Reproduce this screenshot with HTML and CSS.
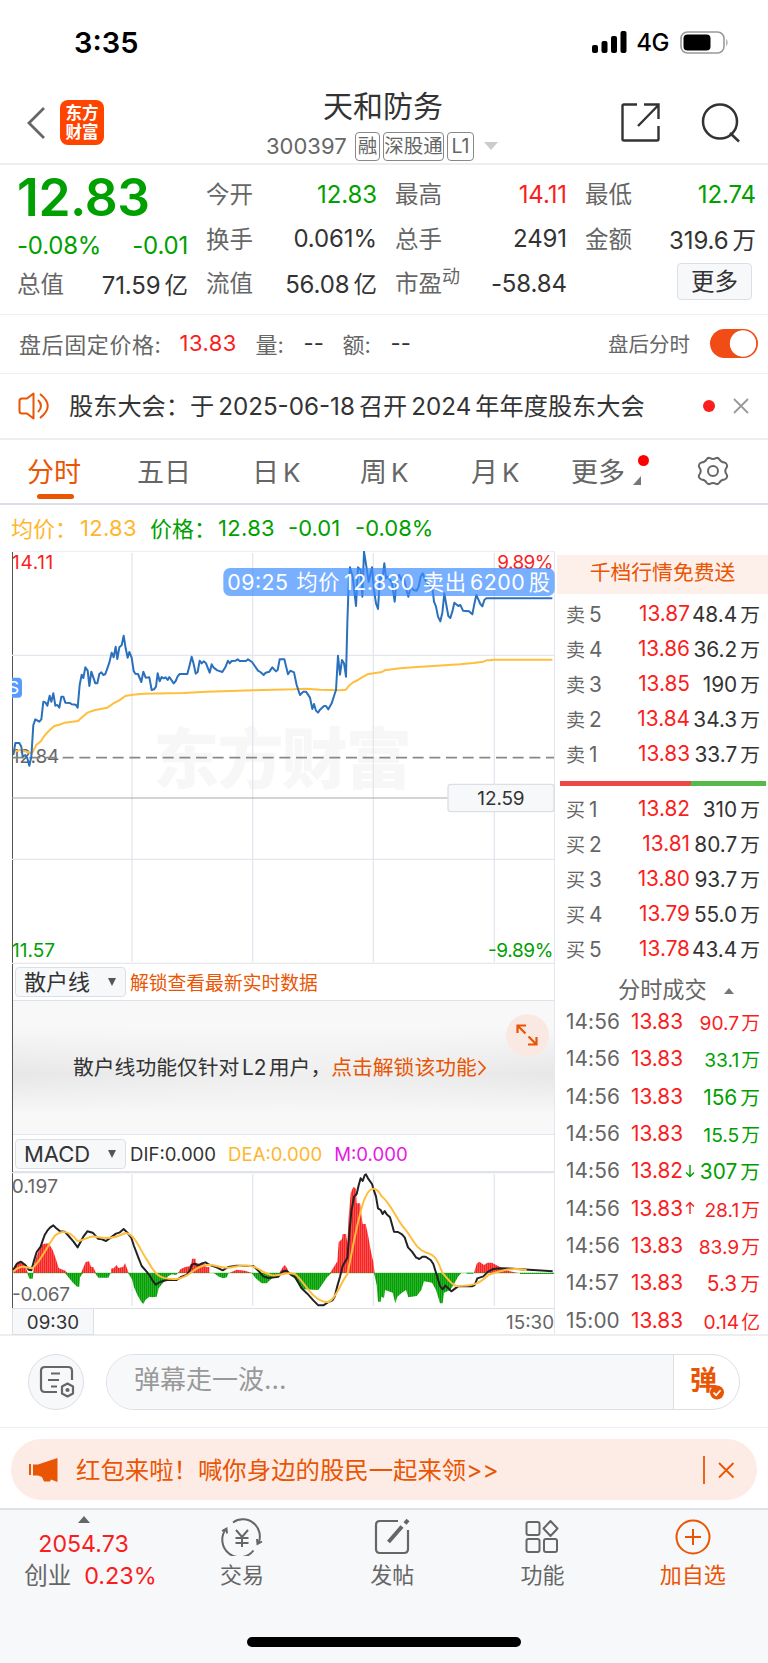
FILE: index.html
```html
<!DOCTYPE html>
<html lang="zh-CN">
<head>
    <meta charset="UTF-8">
    <meta name="viewport" content="width=device-width, initial-scale=1.0">
    <title>天和防务 300397</title>
    <link rel="stylesheet" href="styles.css">
</head>
<body>
    <div class="status-bar">
        <span class="clock">3:35</span>
        <div class="status-icons">
            <svg width="35" height="22" viewBox="0 0 35 22">
                <rect x="0" y="14" width="6" height="8" rx="2"/>
                <rect x="9.5" y="10" width="6" height="12" rx="2"/>
                <rect x="19" y="5" width="6" height="17" rx="2"/>
                <rect x="28.5" y="0" width="6" height="22" rx="2"/>
            </svg>
            <span class="network">4G</span>
            <svg width="49" height="23" viewBox="0 0 49 23">
                <rect x="1" y="1" width="43" height="21" rx="6.5" fill="none" stroke="#999" stroke-width="1.6"/>
                <rect x="3.5" y="3.5" width="27" height="16" rx="4"/>
                <path d="M46.3 7.5q2.4 4 0 8z" fill="#999"/>
            </svg>
        </div>
    </div>

    <header class="header">
        <svg class="back" width="20" height="34" viewBox="0 0 20 34"><path d="M18 2L3 17l15 15" fill="none" stroke="#666" stroke-width="2.8"/></svg>
        <div class="logo">东方<br>财富</div>
        <div class="stock">
            <h1>天和防务</h1>
            <div class="stock-sub">
                <span class="code">300397</span>
                <span class="badge">融</span>
                <span class="badge wide">深股通</span>
                <span class="badge l1">L1</span>
                <svg width="14" height="8" viewBox="0 0 14 8"><path d="M0 0h14L7 8z" fill="#ccc"/></svg>
            </div>
        </div>
        <svg class="share" width="42" height="42" viewBox="0 0 42 42" fill="none" stroke="#333" stroke-width="2.4">
            <path d="M17 2.5H4Q2.500 2.500 2.500 4v33q0 1.500 1.500 1.500h33q1.500 0 1.500-1.500V24"/>
            <path d="M24 2.500h14.500V17M38 3.500L18 24"/>
        </svg>
        <svg class="search" width="42" height="42" viewBox="0 0 42 42" fill="none" stroke="#333" stroke-width="2.500">
            <circle cx="20" cy="19.500" r="17"/>
            <path d="M30 31l9 8.500"/>
        </svg>
    </header>

    <section class="quote">
        <div class="quote-col first">
            <div class="price">12.83</div>
            <div class="row change"><span>-0.08%</span><span>-0.01</span></div>
            <div class="row cap"><label>总值</label><b>71.59<i>亿</i></b></div>
        </div>
        <div class="quote-col">
            <div class="row"><label>今开</label><b class="down">12.83</b></div>
            <div class="row"><label>换手</label><b>0.061%</b></div>
            <div class="row"><label>流值</label><b>56.08<i>亿</i></b></div>
        </div>
        <div class="quote-col">
            <div class="row"><label>最高</label><b class="up">14.11</b></div>
            <div class="row"><label>总手</label><b>2491</b></div>
            <div class="row"><label>市盈<sup>动</sup></label><b>-58.84</b></div>
        </div>
        <div class="quote-col">
            <div class="row"><label>最低</label><b class="down">12.74</b></div>
            <div class="row"><label>金额</label><b>319.6<i>万</i></b></div>
            <div class="row end"><button class="more-button">更多</button></div>
        </div>
    </section>

    <section class="after-hours">
        <span>盘后固定价格:</span>
        <span class="up fixed-price">13.83</span>
        <span class="vol">量:</span><span class="dash">--</span>
        <span class="amount">额:</span><span class="dash">--</span>
        <span class="switch-label">盘后分时</span>
        <span class="switch"></span>
    </section>

    <section class="news">
        <svg width="33" height="30" viewBox="0 0 33 30" fill="none" stroke="#ea5504" stroke-width="2">
            <path d="M15.500 2.500v25l-6.500-5H4q-2.500 0-2.500-2.500V10Q1.500 7.500 4 7.500h5z" stroke-linejoin="round"/>
            <path d="M20 9q6 6 0 12M22 3q15.500 12 0 24"/>
        </svg>
        <p>股东大会：于<em>2025-06-18</em>召开<em>2024</em>年年度股东大会</p>
        <span class="dot"></span>
        <svg class="news-close" width="16" height="16" viewBox="0 0 16 16"><path d="M1 1l14 14M15 1L1 15" stroke="#999" stroke-width="1.800"/></svg>
    </section>

    <nav class="tabs">
        <a class="tab active">分时</a>
        <a class="tab">五日</a>
        <a class="tab">日<em>K</em></a>
        <a class="tab">周<em>K</em></a>
        <a class="tab">月<em>K</em></a>
        <a class="tab more">更多
            <span class="tab-dot"></span>
            <svg class="corner" width="8" height="9" viewBox="0 0 8 9"><path d="M8 0v9H0z" fill="#777"/></svg>
        </a>
        <svg class="gear" width="32" height="30" viewBox="0 0 32 30" fill="none" stroke="#666" stroke-width="2">
            <path d="M9.500 3.500Q11 1.200 13 2.200q3 1.600 6 0 2-1 3.500 1.300 1.600 2.700 5 3Q29.500 7 30 9q.5 1.500-.7 3-2 3 0 6 1.200 1.500.7 3-.5 2-2.500 2.500-3.400.3-5 3-1.500 2.300-3.500 1.300-3-1.600-6 0-2 1-3.500-1.300-1.600-2.700-5-3Q2.500 23 2 21q-.5-1.500.7-3 2-3 0-6-1.200-1.500-.7-3 .5-2 2.500-2.500 3.400-.3 5-3z"/>
            <circle cx="16" cy="15" r="5"/>
        </svg>
    </nav>

    <div class="average">
        <span class="avg">均价：</span><span class="avg n1">12.83</span>
        <span class="cur">价格：</span><span class="n2">12.83</span><span class="n3">-0.01</span><span>-0.08%</span>
    </div>

    <main class="market">
        <div class="charts">
            <!-- intraday price -->
            <svg class="price-chart" width="543" height="413" viewBox="36 33 1629 1239">
                <text class="watermark" x="460" y="730" textLength="775">东方财富</text>
                <g stroke="#e3e6ee" stroke-width="4">
                    <path d="M396 39V1266M758 39V1266M1120 39V1266M1483 39V1266M36 346H1662M36 958H1662"/>
                    <path d="M36 33H1665" stroke="#eee" stroke-width="6"/>
                    <path d="M36 1270H1662" stroke="#e6e8ec"/>
                </g>
                <text class="axis gray" x="35" y="668" textLength="143">12.84</text>
                <path d="M38 653H1662" stroke="#888" stroke-width="5" stroke-dasharray="33 17"/>
                <path d="M36 774H1344" stroke="#aaa" stroke-width="3"/>
                <path class="avg-line" d="M40 636L60 630 82 636 96 640 108 616 124 602 132 589 146 573 163 558 182 553 194 548 234 543 248 530 262 518 286 510 322 503 342 489 358 481 376 468 398 464 430 461 550 459 620 455 760 451 880 448 920 446 960 449 1020 451 1038 449 1046 438 1058 428 1074 420 1086 412 1102 403 1146 396 1154 391 1200 385 1250 381 1300 378 1380 373 1420 369 1450 365 1460 361 1473 361 1480 359 1657 359"/>
                <path class="price-line" d="M40 645L46 609 58 609 64 620 68 650 76 645 82 655 88 677 94 650 100 555 106 538 118 545 124 538 130 485 137 488 142 497 149 467 154 485 160 460 166 497 172 495 178 503 184 470 190 470 196 488 210 489 215 493 227 494 233 503 239 435 245 404 250 414 256 382 263 392 268 438 274 395 280 412 286 430 292 430 298 402 304 397 310 405 316 402 322 385 328 368 335 338 341 352 347 320 352 357 358 322 365 316 371 287 377 325 383 353 388 336 395 353 401 393 406 401 414 402 424 426 430 395 437 413 448 412 455 450 462 448 468 440 473 400 479 424 485 411 491 415 497 412 503 420 508 411 521 430 527 423 533 409 539 402 562 402 569 375 575 350 581 372 587 401 593 396 599 362 605 370 611 364 618 370 629 398 635 373 641 383 652 391 667 396 676 382 684 362 689 370 695 363 707 362 713 358 719 363 738 363 744 358 756 366 774 392 781 396 791 405 797 398 808 395 817 382 828 394 833 390 839 358 853 358 864 403 871 392 882 397 890 435 900 465 910 455 918 455 930 473 937 507 942 492 948 512 954 518 960 509 972 498 978 498 985 508 995 490 1002 468 1008 450 1014 347 1020 404 1026 360 1032 370 1038 410 1042 250 1046 130 1050 82 1058 110 1068 198 1074 82 1082 90 1087 170 1092 35 1100 85 1106 125 1116 82 1122 150 1128 190 1134 207 1140 110 1146 125 1153 70 1158 115 1165 110 1176 130 1184 185 1190 120 1198 105 1204 120 1210 108 1218 145 1225 170 1232 140 1240 150 1250 152 1256 140 1262 110 1268 100 1278 125 1290 140 1298 150 1302 185 1308 200 1314 230 1321 244 1327 218 1333 160 1339 195 1345 228 1351 234 1357 215 1363 188 1375 198 1381 195 1389 212 1407 214 1417 223 1423 192 1429 165 1435 178 1441 192 1447 199 1453 180 1459 175 1657 175"/>
                <text class="axis red" x="36" y="87" textLength="124">14.11</text>
                <text class="axis red" x="1492" y="87" textLength="168">9.89%</text>
                <text class="axis green" x="36" y="1252" textLength="129">11.57</text>
                <text class="axis green" x="1464" y="1252" textLength="196">-9.89%</text>
                <rect x="1344" y="733" width="318" height="82" rx="8" fill="#f7f8fa" stroke="#dcdfe6" stroke-width="4"/>
                <text class="axis dark" x="1432" y="794" textLength="142">12.59</text>
                <path d="M36 413h18q12 0 12 12v36q0 12-12 12H36z" fill="#579bff"/>
                <text x="24" y="463" class="side-mark">S</text>
                <rect x="670" y="84" width="994" height="84" rx="20" fill="#3f8dff" fill-opacity=".7"/>
                <text class="tip" y="151"><tspan x="682" textLength="182">09:25</tspan><tspan x="889" textLength="130">均价</tspan><tspan x="1032" textLength="210">12.830</tspan><tspan x="1268" textLength="130">卖出</tspan><tspan x="1410" textLength="164">6200</tspan><tspan x="1586">股</tspan></text>
            </svg>

            <div class="indicator">
                <button class="select"><span>散户线</span><i class="arrow"></i></button>
                <span class="unlock">解锁查看最新实时数据</span>
            </div>
            <div class="locked">
                <p>散户线功能仅针对<em>L2</em>用户，<a>点击解锁该功能<svg width="10" height="18" viewBox="0 0 10 18"><path d="M1.500 2l6.500 7-6.500 7" fill="none" stroke="#ea5504" stroke-width="1.800"/></svg></a></p>
                <span class="expand">
                    <svg width="24" height="24" viewBox="0 0 24 24" fill="none" stroke="#ea5504" stroke-width="2.200"><path d="M2.500 10V2.500H11M2.500 2.500l8 8M21.500 14v7.500H13M21.500 21.500l-8-8"/></svg>
                </span>
            </div>
            <div class="indicator macd-bar">
                <button class="select"><span>MACD</span><i class="arrow"></i></button>
                <span class="dif">DIF:0.000</span><span class="dea">DEA:0.000</span><span class="m">M:0.000</span>
            </div>

            <!-- MACD -->
            <svg class="macd-chart" width="543" height="136" viewBox="36 36 1629 408">
                <defs>
                    <pattern id="bars-red" width="6" height="500" patternUnits="userSpaceOnUse"><rect width="6" height="500" fill="#ff7f7f"/><rect width="4.500" height="500" fill="#f82424"/></pattern>
                    <pattern id="bars-green" width="6" height="500" patternUnits="userSpaceOnUse"><rect width="6" height="500" fill="#62bf62"/><rect width="4.500" height="500" fill="#00a000"/></pattern>
                </defs>
                <g stroke="#e3e6ee" stroke-width="4">
                    <path d="M396 43V438M758 43V438M1120 43V438M1483 43V438"/>
                    <path d="M36 38H1662" stroke="#dfe2e8"/>
                </g>
                <path fill="url(#bars-red)" d="M40 339V325L52 305H68L80 330 84 339ZM99 339L105 302 117 270 129 252 146 250 158 270 166 292 176 324 184 328 196 332 202 339ZM243 339L257 306 267 304 273 320 280 322 288 339ZM333 339V326L342 324 349 315 356 324 370 320 375 309 382 328 386 339ZM534 339L542 327 556 321 568 319 574 310 576 296H587V308L598 311 612 310 618 321H628V339ZM688 339L710 329 735 332 756 339ZM838 339L848 322 855 315 863 328 866 339ZM990 339L1000 323 1012 304 1016 247 1026 237 1028 222H1038L1042 250 1046 170 1052 100 1060 80 1068 86 1070 130H1080L1088 192H1097L1104 224 1112 270 1120 307 1124 339ZM1422 339L1430 311 1438 305 1452 315 1462 308 1476 308 1490 316 1510 326 1530 334 1554 339Z"/>
                <path fill="url(#bars-green)" d="M82 339L88 356H98L100 339ZM195 339L207 354 219 368 231 380 238 380 240 352 249 339ZM285 339L295 353 325 353 332 339ZM384 339L396 358 402 382 412 405 424 426 430 432 436 420 448 410 456 412 470 410 476 385 488 370 505 348 516 343 528 345 534 339ZM641 339L657 350 670 355 680 352 686 339ZM755 339L767 355 785 370 800 370 816 355 835 346 842 339ZM866 339L880 350 900 380 910 388 955 390 965 376 980 353 994 339ZM1122 339L1130 375 1134 425H1142L1144 410 1152 414 1155 390 1178 398 1186 430 1192 410 1206 398 1218 390 1225 412 1250 408 1264 390 1272 364 1296 368 1308 390 1320 430 1328 430 1332 398 1344 393 1352 388 1362 372 1374 350 1384 339ZM1400 338H1420V341H1400ZM1560 338H1662V342H1560Z"/>
                <path fill="#00a000" fill-opacity=".35" d="M40 337.500H1560V340.500H40Z"/>
                <path class="dif-line" d="M40 330L50 312 62 305 76 315 86 329 94 331 102 302 110 276 122 260 128 242 134 225 142 212 150 203 160 196 168 204 180 214 194 215 206 228 220 244 233 262 242 245 250 230 262 214 278 218 294 236 306 238 318 243 332 233 348 221 358 218 371 207 382 218 394 234 402 258 414 290 425 318 440 335 450 348 458 362 467 374 480 366 500 360 530 360 545 350 560 345 570 330 576 314 584 311 594 317 606 310 616 307 630 315 650 322 668 331 685 321 710 317 760 318 776 333 790 349 805 354 835 350 848 334 860 332 872 344 886 352 904 384 922 401 940 421 955 436 970 436 986 426 998 420 1004 410 1012 378 1020 350 1028 318 1036 304 1042 294 1048 220 1054 155 1062 110 1070 102 1076 76 1082 55 1088 63 1094 46 1098 43 1104 55 1116 72 1122 92 1128 110 1134 145 1142 150 1148 162 1154 153 1160 163 1170 172 1182 215 1194 216 1206 223 1214 232 1224 262 1236 275 1248 292 1258 297 1268 290 1276 290 1292 300 1300 312 1310 345 1320 378 1328 388 1336 377 1344 384 1354 394 1362 388 1374 379 1416 379 1424 375 1432 355 1450 349 1464 335 1480 327 1500 325 1540 326 1658 334"/>
                <path class="dea-line" d="M40 335C60 316 70 318 96 325 115 315 138 265 164 228 182 212 208 208 232 243 250 244 270 222 292 231 315 237 340 237 376 219 404 220 420 270 440 298 460 330 468 360 528 357 570 356 580 316 628 314 656 317 670 330 704 320 730 314 760 318 766 322 784 330 806 350 828 346 848 344 860 335 885 342 910 360 940 430 986 426 1010 415 1020 370 1042 343 1055 285 1078 140 1098 108 1110 82 1128 76 1144 108 1175 132 1190 182 1216 208 1240 240 1250 270 1280 278 1310 285 1315 310 1328 340 1340 350 1352 375 1370 378 1416 378 1436 374 1465 345 1490 336 1530 320 1580 331 1658 333"/>
                <text class="axis gray" x="35" y="98" textLength="139">0.197</text>
                <text class="axis gray" x="36" y="422" textLength="174">-0.067</text>
            </svg>
            <div class="time-axis"><span class="start">09:30</span><span>15:30</span></div>
        </div>

        <aside class="depth">
            <div class="depth-promo">千档行情免费送</div>
            <ul class="levels">
                <li><label>卖<em>5</em></label><b>13.87</b><span>48.4<i>万</i></span></li>
                <li><label>卖<em>4</em></label><b>13.86</b><span>36.2<i>万</i></span></li>
                <li><label>卖<em>3</em></label><b>13.85</b><span>190<i>万</i></span></li>
                <li><label>卖<em>2</em></label><b>13.84</b><span>34.3<i>万</i></span></li>
                <li><label>卖<em>1</em></label><b>13.83</b><span>33.7<i>万</i></span></li>
            </ul>
            <div class="ratio"></div>
            <ul class="levels">
                <li><label>买<em>1</em></label><b>13.82</b><span>310<i>万</i></span></li>
                <li><label>买<em>2</em></label><b>13.81</b><span>80.7<i>万</i></span></li>
                <li><label>买<em>3</em></label><b>13.80</b><span>93.7<i>万</i></span></li>
                <li><label>买<em>4</em></label><b>13.79</b><span>55.0<i>万</i></span></li>
                <li><label>买<em>5</em></label><b>13.78</b><span>43.4<i>万</i></span></li>
            </ul>
            <div class="ticks-title">分时成交 <i></i></div>
            <ul class="ticks">
                <li><time>14:56</time><b>13.83</b><span class="up small">90.7<i>万</i></span></li>
                <li><time>14:56</time><b>13.83</b><span class="down small">33.1<i>万</i></span></li>
                <li><time>14:56</time><b>13.83</b><span class="down">156<i>万</i></span></li>
                <li><time>14:56</time><b>13.83</b><span class="down small">15.5<i>万</i></span></li>
                <li><time>14:56</time><b>13.82</b><svg width="10" height="14" viewBox="0 0 10 14" fill="none" stroke="#00a000" stroke-width="1.400"><path d="M5 1v11M1 8.500l4 4 4-4"/></svg><span class="down">307<i>万</i></span></li>
                <li><time>14:56</time><b>13.83</b><svg width="10" height="14" viewBox="0 0 10 14" fill="none" stroke="#fa1e1e" stroke-width="1.400"><path d="M5 13V2M1 5.500l4-4 4 4"/></svg><span class="up small">28.1<i>万</i></span></li>
                <li><time>14:56</time><b>13.83</b><span class="up small">83.9<i>万</i></span></li>
                <li><time>14:57</time><b>13.83</b><span class="up">5.3<i>万</i></span></li>
                <li><time>15:00</time><b>13.83</b><span class="up small">0.14<i>亿</i></span></li>
            </ul>
        </aside>
    </main>

    <section class="comment">
        <div class="comment-settings">
            <svg width="36" height="34" viewBox="0 0 36 34" fill="none" stroke="#666" stroke-width="2.200">
                <path d="M18 27H6q-4 0-4-4V6q0-4 4-4h23q4 0 4 4v9M12 8.500h9M9 15h11M12 21.500h6"/>
                <path d="M28.500 18.500l5.500 3v7l-5.500 3-5.500-3v-7z" stroke-linejoin="round"/>
                <circle cx="28.500" cy="25" r="1" fill="#666"/>
            </svg>
        </div>
        <div class="comment-box">
            <div class="comment-input">弹幕走一波...</div>
            <div class="danmu">弹
                <svg width="14" height="15" viewBox="0 0 14 15"><circle cx="7" cy="7.500" r="7" fill="#ea5504"/><path d="M3.500 7.500l2.600 2.700 4.500-5" fill="none" stroke="#fff" stroke-width="1.700"/></svg>
            </div>
        </div>
    </section>

    <section class="promo">
        <div class="promo-pill">
            <svg width="29" height="26" viewBox="0 0 29 26" fill="#ea5504"><path d="M0 7h2v11H0zM4 7.500h5L28.500 1v24L22 22.500l-1 2h-6l-2-4.500-4-1.500H4z"/></svg>
            <p>红包来啦！喊你身边的股民一起来领&gt;&gt;</p>
            <svg class="promo-close" width="32" height="28" viewBox="0 0 32 28"><path d="M1 0v28M16 7l14.500 14.500M30.500 7L16 21.500" fill="none" stroke="#ea5504" stroke-width="1.800"/></svg>
        </div>
    </section>

    <footer class="bottom-nav">
        <div class="index">
            <i class="index-arrow"></i>
            <span class="index-value">2054.73</span>
            <span class="index-name">创业<em>0.23%</em></span>
        </div>
        <div class="nav-item">
            <svg width="42" height="38" viewBox="0 0 42 38" fill="none" stroke="#666" stroke-width="2">
                <path d="M12 4.500A17 17 0 0 1 37.500 25M41 23.500L36.500 26l-.5-5M32.500 32.500A17 17 0 0 1 5 11M1 13l4.500-2.500.5 5"/>
                <path d="M15 12l6 7 6-7M21 19v10M14.500 20h13M14.500 25h13"/>
            </svg>
            <span>交易</span>
        </div>
        <div class="nav-item">
            <svg width="38" height="38" viewBox="0 0 38 38" fill="none" stroke="#666" stroke-width="2.200">
                <path d="M25 3H7Q3 3 3 7v24q0 4 4 4h24q4 0 4-4V12"/>
                <path d="M15.500 24L29 8.500M32 5.500l3-3.500" stroke-width="4"/>
            </svg>
            <span>发帖</span>
        </div>
        <div class="nav-item">
            <svg width="36" height="38" viewBox="0 0 36 38" fill="none" stroke="#666" stroke-width="2">
                <rect x="2.500" y="4" width="13" height="13" rx="2"/>
                <rect x="2.500" y="21" width="13" height="13" rx="2"/>
                <rect x="20" y="21" width="13" height="13" rx="2"/>
                <path d="M26.500 3l7 7.500-7 7.500-7-7.500z" stroke-linejoin="round"/>
            </svg>
            <span>功能</span>
        </div>
        <div class="nav-item add">
            <svg width="38" height="38" viewBox="0 0 38 38" fill="none" stroke="#ea5504" stroke-width="2">
                <circle cx="19" cy="19" r="16.500"/>
                <path d="M11 19h16M19 11v16"/>
            </svg>
            <span>加自选</span>
        </div>
        <div class="home-bar"></div>
    </footer>
</body>
</html>
```
FILE: styles.css
```css
* {
    box-sizing: border-box;
}
body {
    margin: 0;
    width: 768px;
    height: 1663px;
    background-color: #fff;
    color: #333;
    font-family: Inter, "Noto Sans CJK SC", sans-serif;
    overflow-x: hidden;
}
svg {
    display: block;
    flex: none;
}
em, i, b {
    font-style: normal;
    font-weight: 400;
}
ul, p, h1 {
    margin: 0;
    padding: 0;
    list-style: none;
    font-weight: 400;
}
button {
    font-family: inherit;
    color: #333;
    background-color: #f7f8fa;
    border: 1.5px solid #dcdfe6;
    border-radius: 4px;
    padding: 0;
}
.up {
    color: #fa1e1e;
}
.down {
    color: #00a000;
}

/* status bar */
.status-bar {
    display: flex;
    justify-content: space-between;
    height: 80px;
    padding: 24px 39px 0 74px;
    color: #000;
}
.clock {
    font-size: 29px;
    font-weight: 600;
    line-height: 38px;
}
.status-icons {
    display: flex;
    align-items: center;
    height: 36px;
}
.network {
    margin: 0 11px 0 9px;
    font-size: 24px;
    font-weight: 500;
    letter-spacing: -0.5px;
}

/* header */
.header {
    display: flex;
    height: 85px;
    padding: 0 26px 0 26px;
    border-bottom: 2px solid #eee;
}
.back {
    margin-top: 26px;
}
.logo {
    width: 44px;
    height: 45px;
    margin: 20px 0 0 14px;
    padding-top: 4px;
    border-radius: 8px;
    background-color: #ff4400;
    color: #fff;
    font-size: 16.5px;
    font-weight: 700;
    line-height: 19px;
    text-align: center;
}
.stock {
    width: 236px;
    margin: 8px 0 0 162px;
}
.stock h1 {
    width: 234px;
    font-size: 30px;
    line-height: 36px;
    text-align: center;
}
.stock-sub {
    display: flex;
    align-items: center;
    height: 30px;
    margin-top: 7px;
    color: #666;
}
.code {
    width: 89px;
    font-size: 22px;
}
.badge {
    width: 25px;
    height: 29px;
    margin-right: 3px;
    border: 1.5px solid #888;
    border-radius: 4px;
    font-size: 19.5px;
    line-height: 26px;
    text-align: center;
    white-space: nowrap;
}
.badge.wide {
    width: 61px;
}
.badge.l1 {
    width: 27px;
    margin-right: 10px;
}
.share {
    margin: 22px 0 0 118px;
}
.search {
    margin: 22px 0 0 38px;
}

/* quote */
.quote {
    display: grid;
    grid-template-columns: 171px 171px 172px 171px;
    gap: 18px;
    height: 150px;
    padding: 7px 0 0 17px;
    border-bottom: 1.5px solid #eee;
}
.row {
    display: flex;
    justify-content: space-between;
    align-items: center;
    height: 44.5px;
    font-size: 24px;
    white-space: nowrap;
}
.row label {
    margin-top: -2px;
    color: #666;
    font-size: 23.5px;
}
.row b {
    letter-spacing: -0.1px;
}
.row i {
    margin-left: 4px;
    font-size: 23.5px;
}
.row sup {
    font-size: 18px;
    line-height: 0;
    vertical-align: 9px;
}
.price {
    height: 50px;
    color: #00a000;
    font-size: 51.5px;
    font-weight: 600;
    line-height: 50px;
    letter-spacing: -0.4px;
}
.change {
    height: 46px;
    color: #00a000;
    letter-spacing: -0.2px;
}
.cap {
    height: 31px;
}
.row.end {
    justify-content: flex-end;
}
.more-button {
    width: 75px;
    height: 37px;
    margin-right: 4px;
    margin-top: -4px;
    font-size: 23.5px;
    line-height: 33px;
}

/* after hours */
.after-hours {
    display: flex;
    align-items: center;
    height: 59px;
    padding: 0 10px 2px 19px;
    border-bottom: 1.5px solid #eee;
    color: #666;
    font-size: 22px;
    white-space: nowrap;
}
.after-hours > span:first-child {
    letter-spacing: 0.6px;
}
.fixed-price {
    width: 76px;
    margin-left: 18px;
    letter-spacing: 0.4px;
}
.vol, .amount {
    width: 48px;
}
.dash {
    width: 39px;
    color: #333;
}
.switch-label {
    margin-left: auto;
    font-size: 20.5px;
}
.switch {
    width: 48px;
    height: 29px;
    margin-left: 20px;
    border-radius: 15px;
    background: radial-gradient(circle at 33px 14.5px, #fff 12.8px, #f24c16 13.6px);
}

/* news */
.news {
    display: flex;
    align-items: center;
    height: 66px;
    padding: 0 19px 0 18px;
    border-bottom: 2px solid #eee;
}
.news p {
    margin: -4px 0 0 18px;
    font-size: 24.2px;
    white-space: nowrap;
}
.news em {
    margin: 0 4px;
}
.dot {
    width: 12px;
    height: 12px;
    margin-left: auto;
    border-radius: 50%;
    background-color: #fa1e1e;
}
.news-close {
    margin-left: 18px;
}

/* tabs */
.tabs {
    display: flex;
    align-items: center;
    height: 65px;
    padding: 0 0 2px 27px;
    border-bottom: 2px solid #dcdfe6;
}
.tab {
    position: relative;
    width: 110px;
    color: #666;
    font-size: 27px;
    white-space: nowrap;
}
.tab em {
    margin-left: 4px;
    font-size: 26px;
}
.tab:nth-child(2) {
    width: 115px;
}
.tab:nth-child(3) {
    width: 108px;
}
.tab:nth-child(4) {
    width: 111px;
}
.tab:nth-child(5) {
    width: 100px;
}
.tab.more {
    width: 126px;
}
.tab.active {
    color: #ea5504;
}
.tab.active::after {
    content: "";
    position: absolute;
    left: 10px;
    bottom: -9px;
    width: 37px;
    height: 5px;
    border-radius: 3px;
    background-color: #ea5504;
}
.tab-dot {
    position: absolute;
    left: 67px;
    top: 4px;
    width: 11px;
    height: 11px;
    border-radius: 50%;
    background-color: #ff0000;
}
.corner {
    position: absolute;
    left: 62px;
    bottom: 5px;
}

.average {
    display: flex;
    align-items: center;
    height: 46px;
    padding: 0 0 1px 11px;
    color: #00a000;
    font-size: 22px;
    white-space: nowrap;
}
.average .avg {
    color: #ffb62e;
}
.average .avg:first-child, .average .cur {
    margin-top: -2px;
}
.average .n1 {
    width: 70px;
    margin-left: 3px;
    letter-spacing: 0.3px;
}
.average .n2 {
    width: 70px;
    margin-left: 2px;
    letter-spacing: 0.3px;
}
.average .n3 {
    width: 67px;
}

/* charts */
.market {
    display: flex;
    height: 785px;
    border-bottom: 2px solid #eee;
}
.charts {
    width: 543px;
    margin-left: 12px;
    border-left: 1px solid #555;
    border-right: 1.5px solid #e3e6ee;
}
.charts svg.price-chart, .charts svg.macd-chart {
    margin-left: -1px;
}
.axis {
    font-size: 57px;
}
.red {
    fill: #fa1e1e;
}
.green {
    fill: #00a000;
}
.gray {
    fill: #666;
}
.dark {
    fill: #333;
}
.watermark {
    font-size: 198px;
    font-weight: 900;
    fill: #f7f7f7;
}
.tip {
    font-size: 64px;
    fill: #fff;
}
.side-mark {
    font-size: 52px;
    fill: #fff;
}
.price-line, .avg-line, .dif-line, .dea-line {
    fill: none;
    stroke-width: 6;
    stroke-linejoin: round;
}
.price-line {
    stroke: #2a70bd;
}
.avg-line, .dea-line {
    stroke: #ffbe3c;
}
.dif-line {
    stroke: #222;
}
.indicator {
    display: flex;
    align-items: center;
    height: 37px;
    padding-left: 2px;
    border-bottom: 1.5px solid #dfe2e8;
    white-space: nowrap;
}
.select {
    display: flex;
    align-items: center;
    justify-content: space-between;
    width: 111px;
    height: 30px;
    padding: 0 9px 0 8px;
    font-size: 22px;
    line-height: 26px;
}
.arrow {
    border: 4.5px solid transparent;
    border-top: 8px solid #555;
    border-bottom: 0;
}
.unlock {
    margin: -2px 0 0 4px;
    color: #ea5504;
    font-size: 18.8px;
}
.locked {
    position: relative;
    display: flex;
    align-items: center;
    height: 134px;
    padding: 0 0 4px 60px;
    background: radial-gradient(ellipse 300px 60px at 50% 50%, rgba(250, 250, 250, 0.5), transparent), linear-gradient(#f8f8f8 20%, #e6e6e6 55%, #f8f8f8 85%);
    border-bottom: 1.5px solid #e3e6ee;
}
.locked p {
    font-size: 20.8px;
    white-space: nowrap;
}
.locked em {
    margin: 0 2.5px;
}
.locked a {
    color: #ea5504;
}
.locked a svg {
    display: inline-block;
    vertical-align: -2px;
}
.expand {
    position: absolute;
    right: 5px;
    top: 13px;
    width: 43px;
    height: 43px;
    padding: 9px;
    border-radius: 50%;
    background-color: #fae9e2;
}
.macd-bar {
    padding-top: 2px;
}
.dif, .dea, .m {
    margin-left: 4px;
    font-size: 18.6px;
}
.dea {
    margin-left: 12px;
    color: #ffb62e;
}
.m {
    margin-left: 12px;
    color: #e61ae6;
}
.time-axis {
    display: flex;
    justify-content: space-between;
    height: 27px;
    margin-left: -1px;
    border-top: 1.5px solid #dcdfe6;
    color: #666;
    font-size: 18.8px;
    line-height: 27px;
}
.start {
    width: 82px;
    background-color: #f7f8fa;
    border: 1.5px solid #dcdfe6;
    border-top: 0;
    color: #333;
    text-align: center;
}

/* depth */
.depth {
    flex: 1;
    padding: 4px 0 0 2px;
    font-size: 20.8px;
}
.depth-promo {
    height: 39px;
    background-color: #fdf0ea;
    color: #ea5504;
    line-height: 36px;
    text-align: center;
}
.levels {
    padding: 2px 8px 0 9px;
}
.levels li {
    display: flex;
    align-items: center;
    height: 35px;
    white-space: nowrap;
}
.levels label {
    width: 54px;
    color: #666;
    font-size: 19px;
}
.levels em {
    margin-left: 4px;
    font-size: 20.8px;
}
.levels b, .ticks b {
    width: 70px;
    color: #fa1e1e;
    text-align: right;
}
.levels span, .ticks span {
    margin-left: auto;
}
.levels i, .ticks i {
    margin-left: 3px;
    font-size: 19.8px;
}
.ratio {
    width: 206px;
    height: 5px;
    margin: 10px 0 3px 3px;
    background: linear-gradient(100deg, #ec4848 63.2%, #57b947 63.7%);
}
.ticks-title {
    height: 32px;
    margin-top: 7px;
    padding-left: 61px;
    color: #666;
    font-size: 22.2px;
    line-height: 34px;
}
.ticks-title i {
    display: inline-block;
    margin: 0 0 4px 11px;
    border: 5.5px solid transparent;
    border-top: 0;
    border-bottom: 6px solid #777;
}
.ticks {
    margin-top: -2px;
    padding: 0 8px 0 9px;
}
.ticks li {
    display: flex;
    align-items: center;
    height: 37.3px;
    white-space: nowrap;
}
.ticks time {
    width: 57px;
    color: #666;
    letter-spacing: 0.1px;
}
.ticks b {
    width: 60px;
}
.ticks svg {
    margin-left: 2px;
}
.ticks .small {
    font-size: 19.2px;
}
.ticks .small i {
    margin-left: 2px;
    font-size: 18.8px;
}

/* comment */
.comment {
    display: flex;
    height: 92px;
    padding: 18px 28px 0;
    border-bottom: 1px solid #eee;
}
.comment-settings {
    display: flex;
    align-items: center;
    justify-content: center;
    width: 56px;
    height: 56px;
    padding-left: 2px;
    border: 1.5px solid #dcdfe6;
    border-radius: 50%;
    background-color: #f7f8fa;
}
.comment-box {
    display: flex;
    width: 634px;
    height: 56px;
    margin-left: 22px;
    border: 1.5px solid #dcdfe6;
    border-radius: 28px;
    overflow: hidden;
}
.comment-input {
    flex: 1;
    padding-left: 27px;
    border-right: 1.5px solid #dcdfe6;
    background-color: #f7f8fa;
    color: #999;
    font-size: 26px;
    line-height: 49px;
}
.danmu {
    position: relative;
    width: 65px;
    padding-left: 16px;
    color: #ea5504;
    font-size: 27px;
    font-weight: 700;
    line-height: 51px;
}
.danmu svg {
    position: absolute;
    left: 36px;
    top: 30px;
}

/* promo */
.promo {
    height: 80px;
    padding: 11px 11px 0;
}
.promo-pill {
    display: flex;
    align-items: center;
    height: 61px;
    padding: 0 22px 0 18px;
    border-radius: 31px;
    background-color: #fdece5;
    color: #ea5504;
}
.promo-pill p {
    margin: -3px 0 0 18px;
    font-size: 24.4px;
    white-space: nowrap;
}
.promo-close {
    margin-left: auto;
}

/* bottom nav */
.bottom-nav {
    position: relative;
    display: flex;
    height: 155px;
    border-top: 2px solid #dbe1e8;
    background-color: #f7f8fa;
}
.index {
    display: flex;
    flex-direction: column;
    align-items: center;
    width: 167px;
    padding-top: 6px;
    color: #fa1e1e;
    font-size: 23.2px;
    line-height: 32px;
}
.index-arrow {
    border: 6.5px solid transparent;
    border-top: 0;
    border-bottom: 7px solid #666;
}
.index-value {
    margin-top: 5px;
}
.index-name {
    margin-left: 14px;
    color: #666;
    font-size: 23.5px;
}
.index-name em {
    margin-left: 13px;
    color: #fa1e1e;
    font-size: 23.4px;
}
.nav-item {
    display: flex;
    flex-direction: column;
    align-items: center;
    width: 150.2px;
    padding-top: 8px;
    color: #666;
    font-size: 22px;
    line-height: 30px;
}
.nav-item span {
    margin-top: 4px;
}
.nav-item.add {
    color: #ea5504;
}
.home-bar {
    position: absolute;
    left: 247px;
    bottom: 16px;
    width: 274px;
    height: 10px;
    border-radius: 5px;
    background-color: #000;
}
```
